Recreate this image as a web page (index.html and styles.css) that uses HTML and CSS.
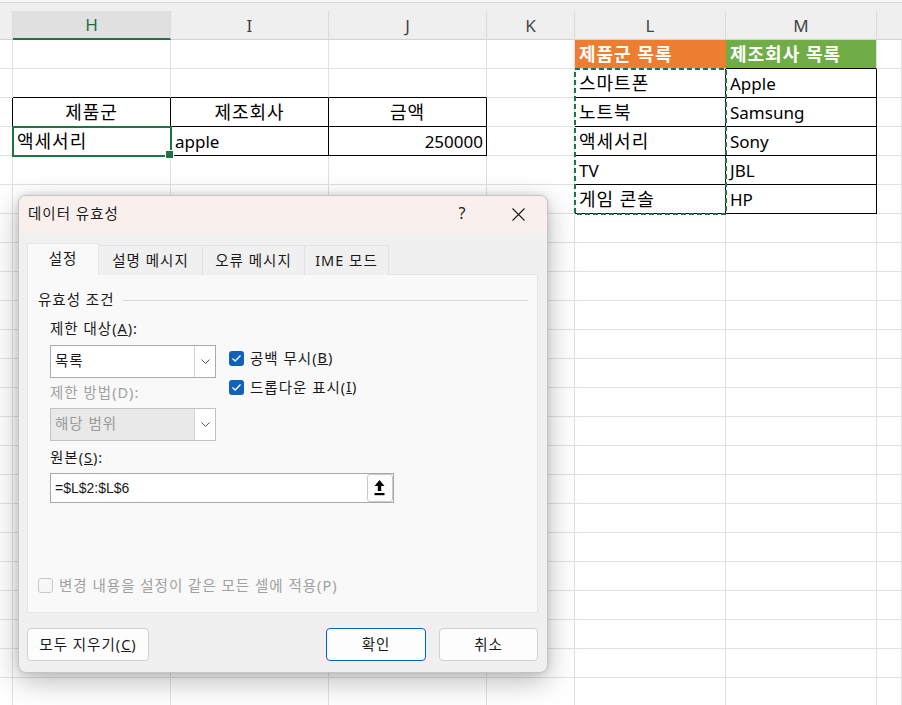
FILE: index.html
```html
<!DOCTYPE html>
<html lang="ko">
<head>
<meta charset="utf-8">
<title>데이터 유효성</title>
<link rel="stylesheet" href="styles.css">
</head>
<body>
<div class="app">
  <div class="topstrip"></div>
  <div class="colheads">
    <div class="ch w-g"></div>
    <div class="ch w-h sel">H</div>
    <div class="ch w-i">I</div>
    <div class="ch w-j">J</div>
    <div class="ch w-k">K</div>
    <div class="ch w-l">L</div>
    <div class="ch w-m">M</div>
    <div class="ch w-n"></div>
  </div>

  <div class="sheet">
    <table class="grid">
      <colgroup>
        <col class="w-g"><col class="w-h"><col class="w-i"><col class="w-j"><col class="w-k"><col class="w-l"><col class="w-m"><col class="w-nc">
      </colgroup>
      <tr><td></td><td></td><td></td><td></td><td></td><td class="ko hd-orange">제품군 목록</td><td class="ko hd-green bb">제조회사 목록</td><td></td></tr>
      <tr><td></td><td class="bb"></td><td class="bb"></td><td class="bb"></td><td></td><td class="ko bb br">스마트폰</td><td class="bb br">Apple</td><td></td></tr>
      <tr><td class="br"></td><td class="ko c bb br">제품군</td><td class="ko c bb br">제조회사</td><td class="ko c bb br">금액</td><td></td><td class="ko bb br">노트북</td><td class="bb br">Samsung</td><td></td></tr>
      <tr><td class="br"></td><td class="ko bb br active">액세서리</td><td class="bb br">apple</td><td class="r bb br">250000</td><td></td><td class="ko bb br">액세서리</td><td class="bb br">Sony</td><td></td></tr>
      <tr><td></td><td></td><td></td><td></td><td></td><td class="bb br">TV</td><td class="bb br">JBL</td><td></td></tr>
      <tr><td></td><td></td><td></td><td></td><td></td><td class="ko bb br">게임 콘솔</td><td class="bb br">HP</td><td></td></tr>
      <tr><td></td><td></td><td></td><td></td><td></td><td></td><td></td><td></td></tr>
      <tr><td></td><td></td><td></td><td></td><td></td><td></td><td></td><td></td></tr>
      <tr><td></td><td></td><td></td><td></td><td></td><td></td><td></td><td></td></tr>
      <tr><td></td><td></td><td></td><td></td><td></td><td></td><td></td><td></td></tr>
      <tr><td></td><td></td><td></td><td></td><td></td><td></td><td></td><td></td></tr>
      <tr><td></td><td></td><td></td><td></td><td></td><td></td><td></td><td></td></tr>
      <tr><td></td><td></td><td></td><td></td><td></td><td></td><td></td><td></td></tr>
      <tr><td></td><td></td><td></td><td></td><td></td><td></td><td></td><td></td></tr>
      <tr><td></td><td></td><td></td><td></td><td></td><td></td><td></td><td></td></tr>
      <tr><td></td><td></td><td></td><td></td><td></td><td></td><td></td><td></td></tr>
      <tr><td></td><td></td><td></td><td></td><td></td><td></td><td></td><td></td></tr>
      <tr><td></td><td></td><td></td><td></td><td></td><td></td><td></td><td></td></tr>
      <tr><td></td><td></td><td></td><td></td><td></td><td></td><td></td><td></td></tr>
      <tr><td></td><td></td><td></td><td></td><td></td><td></td><td></td><td></td></tr>
      <tr><td></td><td></td><td></td><td></td><td></td><td></td><td></td><td></td></tr>
      <tr><td></td><td></td><td></td><td></td><td></td><td></td><td></td><td></td></tr>
      <tr><td></td><td></td><td></td><td></td><td></td><td></td><td></td><td></td></tr>
    </table>
    <svg class="marquee" width="153" height="147" viewBox="0 0 153 147">
      <rect x="1" y="1" width="151" height="145" fill="none" stroke="#217346" stroke-width="2" stroke-dasharray="5 3"/>
    </svg>
  </div>

  <div class="dialog">
    <div class="titlebar">
      <span class="title">데이터 유효성</span>
      <span class="help">?</span>
      <span class="close">
        <svg width="13" height="13" viewBox="0 0 13 13"><path d="M0.5 0.5 L12.5 12.5 M12.5 0.5 L0.5 12.5" stroke="#1a1a1a" stroke-width="1.1" fill="none"/></svg>
      </span>
    </div>
    <div class="dbody">
      <div class="tabs">
        <div class="tab active t1">설정</div>
        <div class="tab t2">설명 메시지</div>
        <div class="tab t3">오류 메시지</div>
        <div class="tab t4">IME 모드</div>
      </div>
      <div class="panel">
        <div class="group"><span>유효성 조건</span><span class="rule"></span></div>
        <div class="lbl lbl-first">제한 대상(<u>A</u>):</div>
        <div class="row">
          <div class="lcol">
            <div class="select">
              <span class="val">목록</span>
              <span class="chev"><svg width="9" height="5" viewBox="0 0 9 5"><path d="M0.5 0.5 L4.5 4.5 L8.5 0.5" stroke="#555" stroke-width="1" fill="none"/></svg></span>
            </div>
            <div class="lbl dis lbl-mid">제한 방법(D):</div>
            <div class="select disabled">
              <span class="val">해당 범위</span>
              <span class="chev"><svg width="9" height="5" viewBox="0 0 9 5"><path d="M0.5 0.5 L4.5 4.5 L8.5 0.5" stroke="#555" stroke-width="1" fill="none"/></svg></span>
            </div>
          </div>
          <div class="checks">
            <div class="chk"><span class="box on"><svg width="11" height="9" viewBox="0 0 11 9"><path d="M1.5 4.5 L4.2 7 L9.5 1.5" stroke="#fff" stroke-width="1.3" fill="none"/></svg></span>공백 무시(<u>B</u>)</div>
            <div class="chk"><span class="box on"><svg width="11" height="9" viewBox="0 0 11 9"><path d="M1.5 4.5 L4.2 7 L9.5 1.5" stroke="#fff" stroke-width="1.3" fill="none"/></svg></span>드롭다운 표시(<u>I</u>)</div>
          </div>
        </div>
        <div class="lbl lbl-mid">원본(<u>S</u>):</div>
        <div class="input">
          <span class="formula">=$L$2:$L$6</span>
          <span class="pick"><svg width="24" height="26" viewBox="0 0 24 26"><path d="M11.5 5 L16.5 11 L13.2 11 L13.2 16 L9.8 16 L9.8 11 L6.5 11 Z" fill="#000"/><rect x="6.5" y="18" width="10" height="2.2" fill="#000"/></svg></span>
        </div>
        <div class="chk dis applyall"><span class="box off"></span>변경 내용을 설정이 같은 모든 셀에 적용(P)</div>
      </div>
      <div class="buttons">
        <button class="btn clear">모두 지우기(<u>C</u>)</button>
        <span class="spacer"></span>
        <button class="btn ok">확인</button>
        <button class="btn cancel">취소</button>
      </div>
    </div>
  </div>
</div>
</body>
</html>
```

FILE: styles.css
```css
* { box-sizing: border-box; }
html, body { margin: 0; padding: 0; }
body {
  width: 902px;
  height: 705px;
  overflow: hidden;
  background: #fff;
  font-family: "Noto Sans", "Noto Sans CJK KR", sans-serif;
}
.app { position: relative; width: 902px; height: 705px; overflow: hidden; }

/* column headers */
.topstrip { height: 3px; background: #f6f6f6; border-bottom: 1px solid #d6d6d6; }
.colheads { display: flex; height: 37px; padding-top: 8px; background: #efefef; }
.ch {
  height: 29px;
  border-right: 1px solid #dadada;
  border-bottom: 1px solid #d2d2d2;
  display: flex; align-items: center; justify-content: center;
  font-size: 17px; color: #444;
  flex: none;
}
.ch.sel { background: #e0e0e0; border-bottom: 2px solid #217346; color: #1f6e47; }
.w-g { width: 13px; }
.w-h, .w-i, .w-j { width: 158px; }
.w-k { width: 88px; }
.w-l, .w-m { width: 151px; }
.w-n { flex: 1; border-right: none; }
.w-nc { width: 25px; }

/* grid */
.sheet { position: relative; }
.grid {
  border-collapse: separate;
  border-spacing: 0;
  table-layout: fixed;
  width: 902px;
  font-size: 17px;
  color: #000;
}
.grid td {
  height: 29px;
  padding: 0 0 0 4px;
  border-right: 1px solid #e1e1e1;
  border-bottom: 1px solid #e1e1e1;
  line-height: 27px;
  white-space: nowrap;
  overflow: hidden;
}
.grid td.ko { font-size: 18px; letter-spacing: 1px; }
.grid td.c { text-align: center; padding: 0; }
.grid td.r { text-align: right; padding: 0 3px 0 0; }
.grid td.bb { border-bottom-color: #000; }
.grid td.br { border-right-color: #000; }
.grid td.hd-orange { background: #ed7d31; color: #fff; font-weight: 700; border-right-color: #ed7d31; }
.grid td.hd-green { background: #70ad47; color: #fff; font-weight: 700; }
.grid td.active {
  position: relative;
  overflow: visible;
  outline: 2px solid #217346;
  outline-offset: -1px;
}
.grid td.active::after {
  content: "";
  position: absolute;
  right: -4px;
  bottom: -4px;
  width: 7px;
  height: 7px;
  background: #217346;
  border: 1px solid #fff;
}
.marquee { position: absolute; left: 574px; top: 28px; }

/* dialog */
.dialog {
  position: absolute;
  left: 18px;
  top: 195px;
  width: 530px;
  background: #f0f0f0;
  border: 1px solid #c4c4c4;
  border-radius: 8px;
  box-shadow: 0 8px 28px rgba(0, 0, 0, 0.28), 0 0 6px rgba(0, 0, 0, 0.12);
  overflow: hidden;
  font-size: 14.5px;
  letter-spacing: 1px;
  color: #1a1a1a;
}
.titlebar {
  height: 37px;
  background: #f9f0ed;
  display: flex;
  align-items: center;
  padding-left: 9px;
  padding-bottom: 4px;
}
.title { flex: 1; }
.help { width: 20px; text-align: center; font-size: 16px; color: #222; letter-spacing: 0; margin-top: 1px; }
.close { width: 20px; margin-left: 36px; margin-right: 19px; display: flex; align-items: center; justify-content: center; margin-top: 3px; }

.dbody { padding: 10px 9px 11px 8px; }
.tabs { display: flex; align-items: flex-end; height: 32px; }
.tab {
  height: 30px;
  border: 1px solid #e2e2e2;
  border-bottom: none;
  display: flex; align-items: center; justify-content: center;
  margin-left: -1px;
  background: #f0f0f0;
  padding-bottom: 3px;
}
.tab.active {
  height: 32px;
  margin-left: 0;
  background: #f9f9f9;
  border-color: #e5e5e5;
  position: relative;
  z-index: 1;
  padding-bottom: 4px;
}
.t1 { width: 72px; }
.t2 { width: 105px; }
.t3 { width: 103px; }
.t4 { width: 85px; }

.panel {
  margin-top: -1px;
  height: 339px;
  background: #f9f9f9;
  border: 1px solid #e5e5e5;
  display: flex;
  flex-direction: column;
  padding: 13px 9px 18px 10px;
}
.group { display: flex; align-items: center; height: 20px; }
.group .rule { flex: 1; height: 1px; background: #dadada; margin-left: 9px; margin-top: 4px; }
.lbl { height: 20px; line-height: 20px; margin-left: 12px; }
.lbl-first { margin-top: 10px; }
.lbl-mid { margin-top: 6px; }
.lbl.dis { margin-left: 0; }
.dis { color: #a0a0a0; }

.row { display: flex; margin-top: 7px; margin-left: 12px; }
.lcol { width: 166px; display: flex; flex-direction: column; }
.lcol .lbl-mid { margin-top: 4px; margin-bottom: 6px; }
.select {
  height: 33px;
  border: 1px solid #ababab;
  background: #fff;
  display: flex;
}
.select .val { flex: 1; padding-left: 4px; line-height: 29px; }
.select .chev {
  width: 21px;
  border-left: 1px solid #d3d3d3;
  display: flex; align-items: center; justify-content: center;
  background: #fff;
}
.select.disabled { background: #e9e9e9; border-color: #c2c2c2; color: #9a9a9a; }

.checks { margin-left: 13px; margin-top: 2px; display: flex; flex-direction: column; gap: 9px; }
.chk { display: flex; align-items: center; height: 20px; white-space: nowrap; }
.chk .box { margin-top: 2px; }
.box {
  width: 15px; height: 15px;
  border-radius: 3px;
  margin-right: 6px;
  display: flex; align-items: center; justify-content: center;
  flex: none;
}
.box.on { background: #0f62b8; }
.box.off { border: 1px solid #c9c9c9; background: #f7f7f7; }

.input {
  margin-left: 12px;
  margin-top: 6px;
  width: 344px;
  height: 30px;
  border: 1px solid #a9a9a9;
  background: #fff;
  display: flex;
  align-items: center;
}
.formula {
  flex: 1;
  padding-left: 4px;
  font-family: "Liberation Sans", sans-serif;
  font-size: 14px;
  letter-spacing: 0;
  padding-bottom: 1px;
}
.pick {
  width: 26px; height: 28px;
  border: 1px solid #cacaca;
  border-radius: 3px;
  background: #fdfdfd;
  display: flex; align-items: center; justify-content: center;
}
.pick svg { display: block; }
.applyall { margin-top: auto; }

.buttons { display: flex; margin-top: 15px; gap: 13px; }
.spacer { flex: 1; }
.btn {
  height: 33px;
  border: 1px solid #d0d0d0;
  border-radius: 4px;
  background: #fdfdfd;
  font-family: inherit;
  font-size: 14.5px;
  letter-spacing: 1px;
  color: #1a1a1a;
  padding: 0 0 3px;
}
.btn.clear { width: 122px; }
.btn.ok { width: 100px; border-color: #0067c0; }
.btn.cancel { width: 99px; }
```
